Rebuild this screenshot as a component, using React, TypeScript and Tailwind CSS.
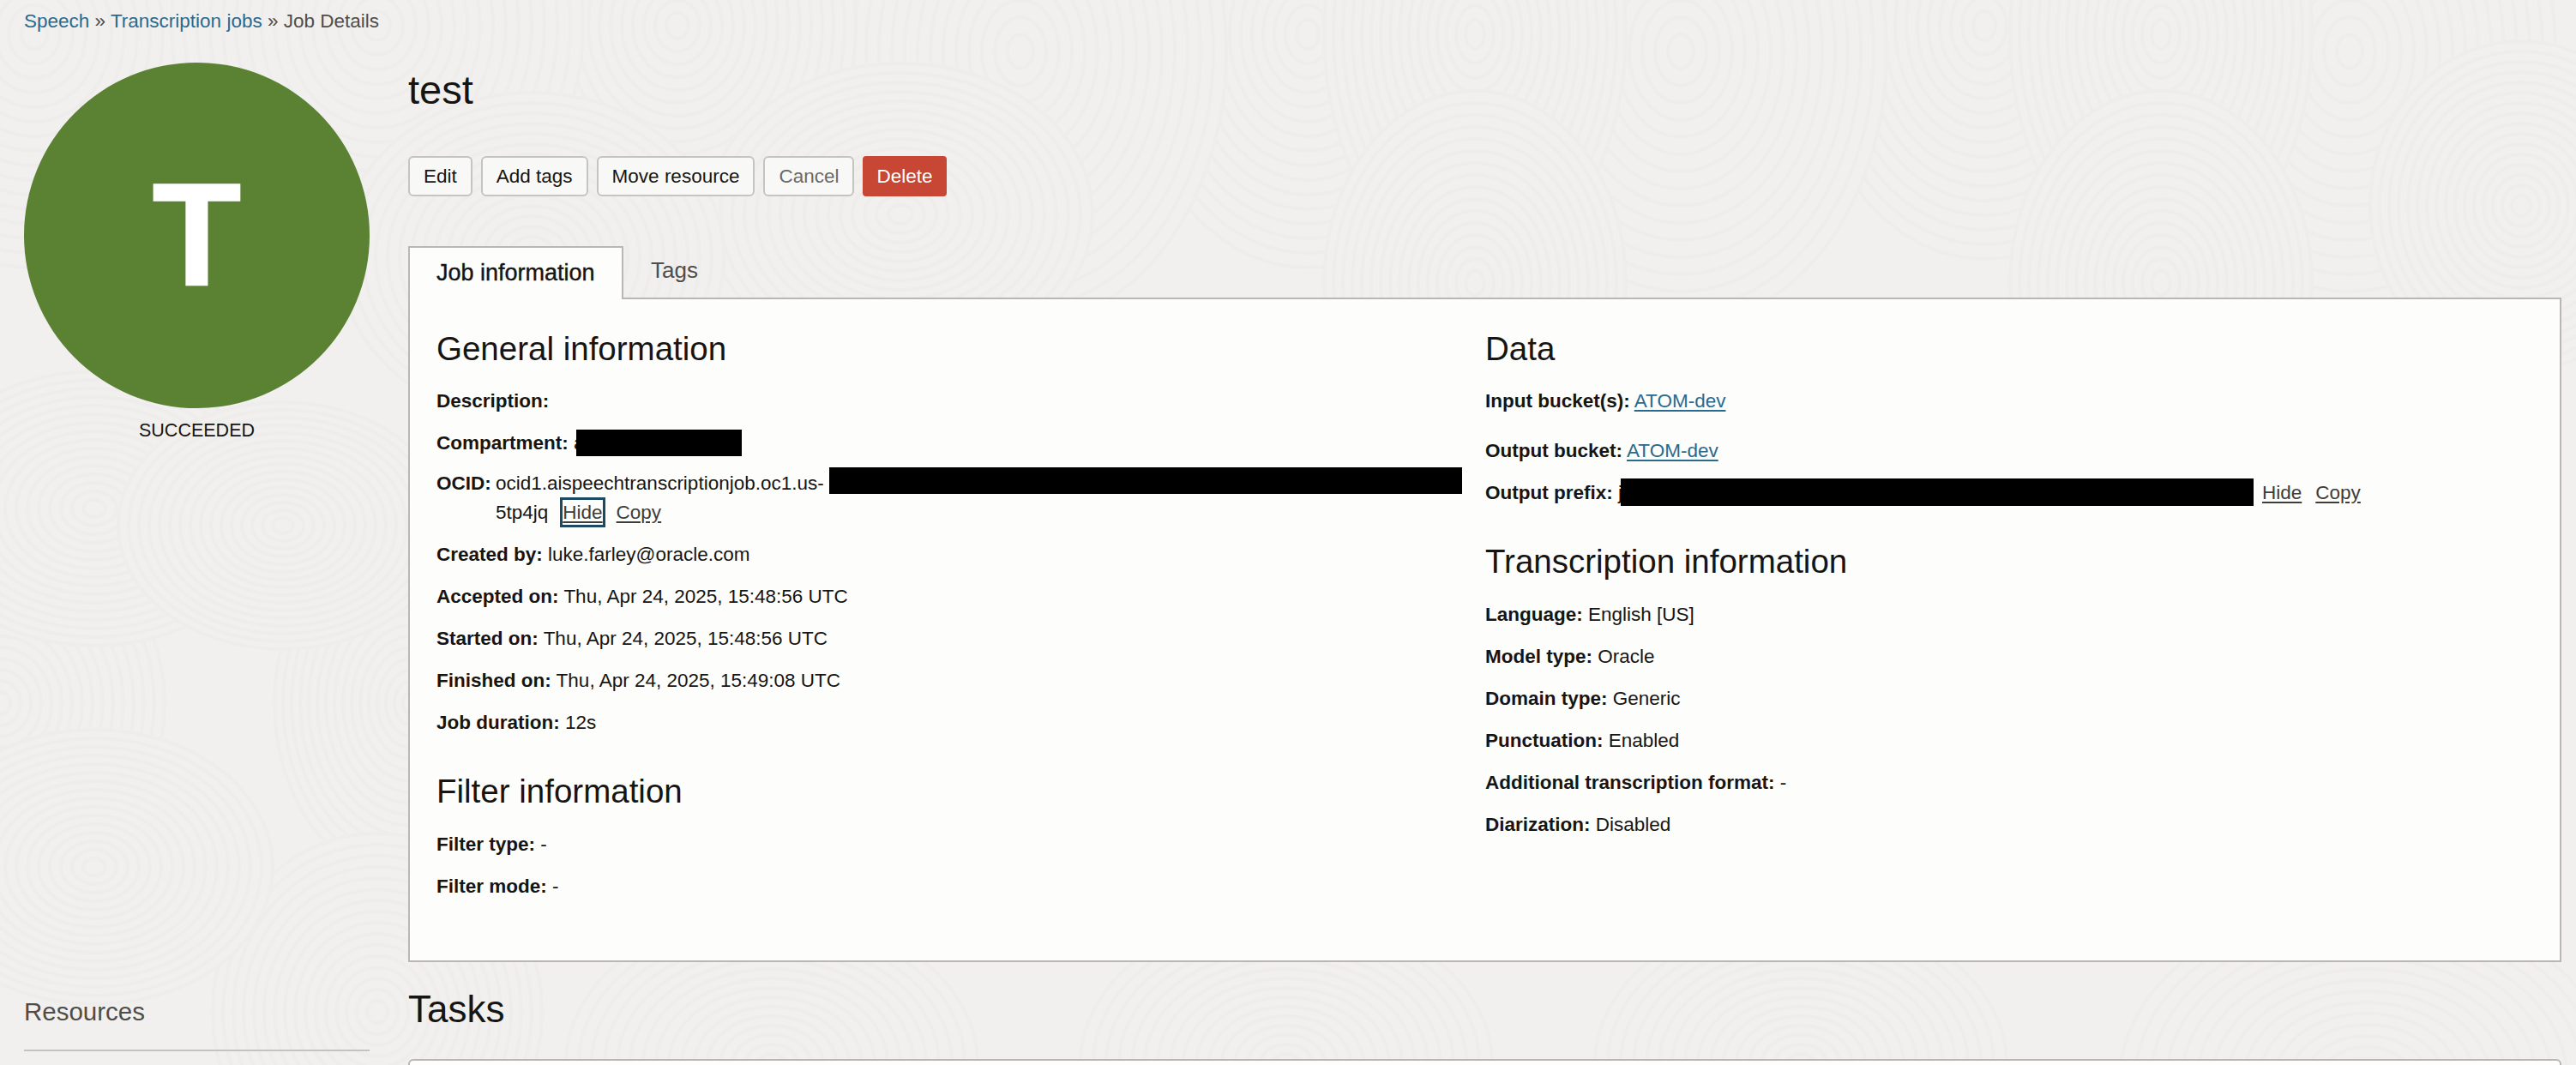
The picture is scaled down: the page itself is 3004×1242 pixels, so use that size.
import React from "react";

const font = { fontFamily: '"Liberation Sans", Arial, sans-serif' };

// faint contour swirls in the page background, painted back to front so they overlap like scales
const swirls = [
  { cx: 1525, cy: 40, rx: 130, ry: 170 },
  { cx: 2314, cy: 30, rx: 130, ry: 170 },
  { cx: 1190, cy: 60, rx: 150, ry: 200 },
  { cx: 1960, cy: 60, rx: 150, ry: 200 },
  { cx: 2740, cy: 60, rx: 150, ry: 200 },
  { cx: 1720, cy: 40, rx: 110, ry: 170 },
  { cx: 2520, cy: 40, rx: 110, ry: 170 },
  { cx: 790, cy: 30, rx: 130, ry: 150 },
  { cx: 40, cy: 40, rx: 150, ry: 170 },
  { cx: 440, cy: 30, rx: 150, ry: 170 },
  { cx: 1720, cy: 330, rx: 110, ry: 140 },
  { cx: 2520, cy: 330, rx: 110, ry: 140 },
  { cx: 2940, cy: 240, rx: 110, ry: 120 },
  { cx: 1050, cy: 250, rx: 140, ry: 110 },
  { cx: 620, cy: 300, rx: 140, ry: 120 },
  { cx: 0, cy: 820, rx: 120, ry: 130 },
  { cx: 480, cy: 820, rx: 100, ry: 130 },
  { cx: 110, cy: 593, rx: 130, ry: 100 },
  { cx: 330, cy: 613, rx: 120, ry: 90 },
  { cx: 440, cy: 1180, rx: 120, ry: 130 },
  { cx: 110, cy: 1011, rx: 130, ry: 100 },
  { cx: 900, cy: 1240, rx: 150, ry: 110 },
  { cx: 1500, cy: 1240, rx: 150, ry: 110 },
  { cx: 2100, cy: 1240, rx: 150, ry: 110 },
  { cx: 2760, cy: 1260, rx: 180, ry: 130 },
];

const Background = () => (
  <svg className="absolute inset-0 w-full h-full" aria-hidden="true">
    {swirls.map((s, i) =>
      Array.from({ length: 16 }).map((_, j) => {
        const k = 1 - j / 16;
        return (
          <ellipse
            key={`${i}-${j}`}
            cx={s.cx}
            cy={s.cy}
            rx={s.rx * k * 1.6}
            ry={s.ry * k * 1.6}
            fill="#f1f0ee"
            stroke="#eeedeb"
            strokeWidth="4"
          />
        );
      })
    )}
  </svg>
);

const Row = ({ label, children }: { label: string; children?: React.ReactNode }) => (
  <p className="h-[49px] leading-[49px] whitespace-nowrap">
    <b className="font-bold">{label}</b> {children}
  </p>
);

const Action = ({ children }: { children: React.ReactNode }) => (
  <button className="h-[47px] px-[16px] rounded-[6px] border-2 border-[#c6c4c0] bg-[#f8f8f7] text-[#161513]">
    {children}
  </button>
);

const Heading = ({ children }: { children: React.ReactNode }) => (
  <h2 className="h-[46px] leading-[46px] text-[38.5px] text-[#161513]">{children}</h2>
);

const Blackout = ({ className }: { className: string }) => (
  <span className={`inline-block align-middle bg-black ${className}`} />
);

export default function App() {
  return (
    <div
      style={font}
      className="relative w-[3004px] h-[1242px] overflow-hidden bg-[#f1f0ee] text-[22.5px] text-[#161513]"
    >
      <Background />
      <div className="relative flex flex-col h-full">
        <nav className="h-[73px] pl-[28px] pt-[10px] leading-[30px] whitespace-nowrap text-[#4f4d4a]">
          <a className="text-[#2a6a8e]">Speech</a> » <a className="text-[#2a6a8e]">Transcription jobs</a> » Job Details
        </nav>

        <div className="flex flex-1 min-h-0">
          <aside className="w-[476px] shrink-0 pl-[28px] flex flex-col">
            <div className="w-[403px] h-[403px] rounded-full bg-[#5b8133] text-white flex items-center justify-center">
              <span className="text-[170px] leading-none font-bold pb-[2px] [-webkit-text-stroke:1.5px]">T</span>
            </div>
            <div className="w-[403px] mt-[11px] text-center leading-[30px] text-[21.5px]">SUCCEEDED</div>
            <div className="w-[403px] mt-[643px] pb-[24px] border-b-2 border-[#c5c3bf] text-[29.5px] leading-[40px] text-[#4f4d4a]">
              Resources
            </div>
          </aside>

          <main className="w-[2511px] shrink-0">
            <h1 className="text-[47px] leading-[56px] h-[109px] pt-[4px]">test</h1>
            <div className="flex gap-[10px]">
              <Action>Edit</Action>
              <Action>Add tags</Action>
              <Action>Move resource</Action>
              <Action>
                <span className="text-[#6b6966]">Cancel</span>
              </Action>
              <button className="h-[47px] px-[16px] rounded-[4px] bg-[#c74634] text-white">Delete</button>
            </div>

            <div className="flex mt-[57px] h-[61px] items-end">
              <div className="relative z-10 h-[62px] -mb-[2px] w-[251px] pl-[31px] leading-[58px] text-[27px] [-webkit-text-stroke:0.4px] bg-[#fdfdfb] border-2 border-b-0 border-[#b9b6b3]">
                Job information
              </div>
              <div className="pl-[32px] h-[61px] leading-[58px] text-[26px] text-[#4f4d4a]">Tags</div>
            </div>

            <section className="h-[775px] bg-[#fdfdfb] border-2 border-[#b9b6b3] pl-[31px] pt-[35px] grid grid-cols-[1223px_1fr]">
              <div>
                <Heading>General information</Heading>
                <div className="mt-[13px]">
                  <Row label="Description:" />
                  <Row label="Compartment:">
                    a<span className="ml-[-10px]"><Blackout className="w-[193px] h-[31px] -translate-y-[2px]" /></span>
                  </Row>
                  <div className="flex h-[81px] pt-[6px] leading-[33px] whitespace-nowrap">
                    <b className="w-[69px]">OCID:</b>
                    <div>
                      <div>
                        ocid1.aispeechtranscriptionjob.oc1.us-
                        <span className="ml-[6px]"><Blackout className="w-[738px] h-[31px] -translate-y-[5px]" /></span>
                      </div>
                      <div>
                        5tp4jq
                        <a className="underline underline-offset-[3px] ml-[14px] py-[2px] border-[3px] border-[#1c4a63] text-[#3f3d3a]">Hide</a>
                        <a className="underline underline-offset-[3px] ml-[13px] text-[#3f3d3a]">Copy</a>
                      </div>
                    </div>
                  </div>
                  <Row label="Created by:">luke.farley@oracle.com</Row>
                  <Row label="Accepted on:">Thu, Apr 24, 2025, 15:48:56 UTC</Row>
                  <Row label="Started on:">Thu, Apr 24, 2025, 15:48:56 UTC</Row>
                  <Row label="Finished on:">Thu, Apr 24, 2025, 15:49:08 UTC</Row>
                  <Row label="Job duration:">12s</Row>
                </div>
                <div className="mt-[33px]">
                  <Heading>Filter information</Heading>
                </div>
                <div className="mt-[14px]">
                  <Row label="Filter type:">-</Row>
                  <Row label="Filter mode:">-</Row>
                </div>
              </div>

              <div>
                <Heading>Data</Heading>
                <div className="mt-[13px]">
                  <Row label="Input bucket(s):">
                    <a className="underline underline-offset-[3px] text-[#2a6a8e]">ATOM-dev</a>
                  </Row>
                  <div className="h-[9px]" />
                  <Row label="Output bucket:">
                    <a className="underline underline-offset-[3px] text-[#2a6a8e]">ATOM-dev</a>
                  </Row>
                  <Row label="Output prefix:">
                    j<span className="ml-[-2px]"><Blackout className="w-[738px] h-[32px] -translate-y-[2px]" /></span>
                    <a className="underline underline-offset-[3px] ml-[10px] text-[#3f3d3a]">Hide</a>
                    <a className="underline underline-offset-[3px] ml-[16px] text-[#3f3d3a]">Copy</a>
                  </Row>
                </div>
                <div className="mt-[33px]">
                  <Heading>Transcription information</Heading>
                </div>
                <div className="mt-[14px]">
                  <Row label="Language:">English [US]</Row>
                  <Row label="Model type:">Oracle</Row>
                  <Row label="Domain type:">Generic</Row>
                  <Row label="Punctuation:">Enabled</Row>
                  <Row label="Additional transcription format:">-</Row>
                  <Row label="Diarization:">Disabled</Row>
                </div>
              </div>
            </section>

            <h2 className="mt-[29px] text-[44px] leading-[52px] text-[#161513]">Tasks</h2>
            <div className="mt-[32px] h-[40px] rounded-t-[6px] bg-[#fdfdfb] border-2 border-[#b9b6b3]" />
          </main>
        </div>
      </div>
    </div>
  );
}
